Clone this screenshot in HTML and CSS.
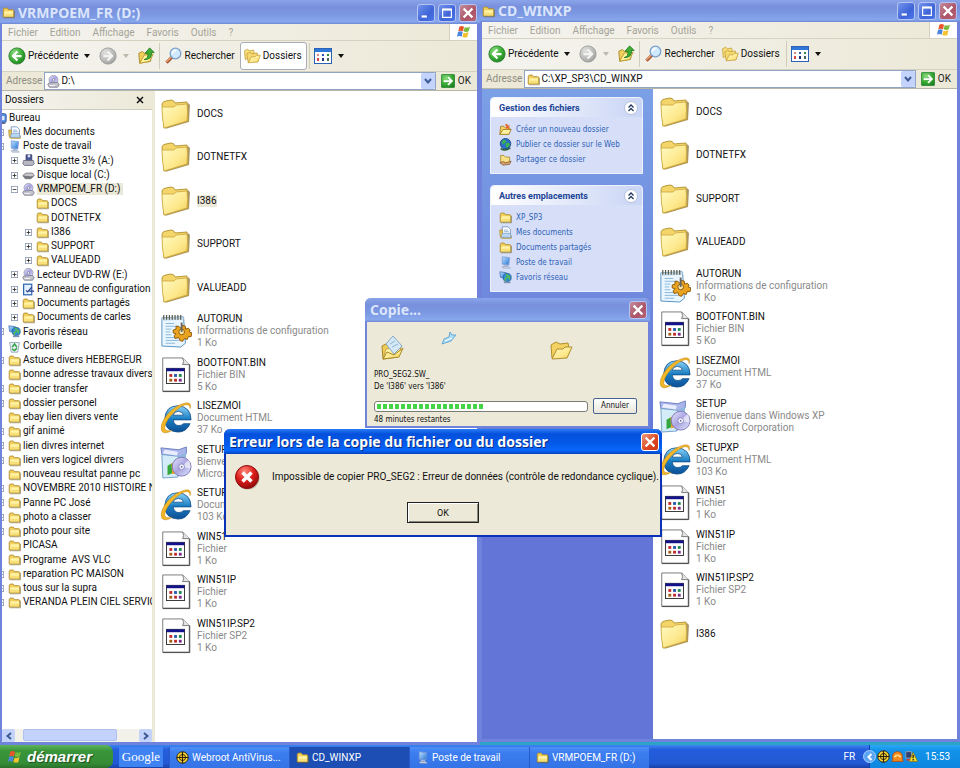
FILE: index.html
```html
<!DOCTYPE html>
<html lang="fr">
<head>
<meta charset="utf-8">
<title>CD_WINXP</title>
<link rel="stylesheet" href="styles.css">
</head>
<body>
<svg class="sprite" aria-hidden="true">
  <defs>
    <linearGradient id="gFold" x1="0" y1="0" x2="1" y2="1"><stop offset="0" stop-color="#fffbc4"/><stop offset=".6" stop-color="#fde88c"/><stop offset="1" stop-color="#f2cc58"/></linearGradient>
    <linearGradient id="gIe" x1="0" y1="0" x2="0" y2="1"><stop offset="0" stop-color="#8ad4f6"/><stop offset=".5" stop-color="#1c7fc4"/><stop offset="1" stop-color="#0d4f94"/></linearGradient>
    <radialGradient id="gGreen" cx=".35" cy=".3" r=".8"><stop offset="0" stop-color="#8fdc80"/><stop offset=".6" stop-color="#36a832"/><stop offset="1" stop-color="#1d7d22"/></radialGradient>
    <radialGradient id="gGrey" cx=".35" cy=".3" r=".8"><stop offset="0" stop-color="#e2e2e0"/><stop offset=".7" stop-color="#b4b4b2"/><stop offset="1" stop-color="#969694"/></radialGradient>
    <radialGradient id="gRed" cx=".4" cy=".25" r=".8"><stop offset="0" stop-color="#ff8a7a"/><stop offset=".5" stop-color="#de1f1c"/><stop offset="1" stop-color="#8a0808"/></radialGradient>
    <linearGradient id="gScreen" x1="0" y1="0" x2="1" y2="1"><stop offset="0" stop-color="#bfe2ff"/><stop offset="1" stop-color="#2474d8"/></linearGradient>
    <linearGradient id="gDisc" x1="0" y1="0" x2="1" y2="1"><stop offset="0" stop-color="#e8e4ff"/><stop offset=".5" stop-color="#a9a4e0"/><stop offset="1" stop-color="#dfe9ff"/></linearGradient>
  </defs>
  <symbol id="folder-big" viewBox="0 0 32 32">
    <path d="M5 31 L29 24 L30 7 L28 5z" fill="#8d7634" opacity=".75"/>
    <path d="M2 6 Q3 3 6 3 L11 2 Q14 2 15 5 L27 4 L28 23 L4 30z" fill="#f3d56a" stroke="#b99a3a"/>
    <path d="M2 9 L14 9 L16 7 L27 6 Q28 14 27 23 L4 30 Q2 20 2 9z" fill="url(#gFold)" stroke="#cda63c" stroke-width=".8"/>
  </symbol>
  <symbol id="folder" viewBox="0 0 16 16">
    <path d="M1.500 13.500V4Q2 2.500 3.500 2.500H6.500L8 4.500H13Q14.500 4.500 14.500 6V13.500z" fill="#f2cf5c" stroke="#a98725"/>
    <path d="M3 6.500H13.500V12.500H2.500z" fill="#fff3a6"/>
    <path d="M3 9.500H13.500V12.500H3z" fill="#f9df78"/>
    <path d="M2 14.500H15.500V6" fill="none" stroke="#6e5a20" opacity=".6"/>
  </symbol>
  <symbol id="folder-open" viewBox="0 0 24 24">
    <path d="M3 20 L2 7 L7 4 L11 6 L19 5 L20 11z" fill="#f3d162" stroke="#b08e2c"/>
    <path d="M3 21 L8 11 L14 11 L16 9 L23 9 L18 20z" fill="url(#gFold)" stroke="#b08e2c"/>
  </symbol>
  <symbol id="folders" viewBox="0 0 24 24">
    <path d="M3 17 L2 5 L6 3 L9 5 L14 4 L15 8z" fill="#f8de7c" stroke="#c09c36"/>
    <path d="M7 21 L5 9 L9 7 L12 9 L19 8 L20 12z" fill="#f6d870" stroke="#c09c36"/>
    <path d="M7 21 L11 13 L16 13 L18 11 L23 11 L20 20z" fill="url(#gFold)" stroke="#c09c36"/>
  </symbol>
  <symbol id="ini" viewBox="0 0 34 36">
    <path d="M2 4 L25 3 L27 31 L22 35 L2 34z" fill="#eaf6ff" stroke="#4f8fbf"/>
    <path d="M2 4 L25 3 L25 6 L2 7z" fill="#c9dcec"/>
    <path d="M4 1v5M7 1v5M10 1v5M13 1v5M16 1v5M19 1v5M22 1v5" stroke="#5b5a48" stroke-width="1.300"/>
    <path d="M6 10h9M6 13h13M6 16h6M6 19h5M6 22h6M6 25h12M6 28h14M6 31h10" stroke="#86b5d8"/>
    <path d="M14 17l3-1 0-3 3 0 2 2 2-3 3 1 0 3 3-1 2 2-1 2 3 1-1 4-3 0-1 3-3-1-2 3-3-1-1-3-4 1-1-3 2-2-3-1z" fill="#e9a31e" stroke="#8a5508"/>
    <circle cx="23" cy="19" r="3" fill="#fbe9a8" stroke="#8a5508"/><path d="M23 9v10" stroke="#666" stroke-width="2"/>
  </symbol>
  <symbol id="bin" viewBox="0 0 32 38">
    <path d="M2 1H23L30 8V36H2z" fill="#fff" stroke="#777"/>
    <path d="M23 1Q25 5 23 8H30" fill="#e4e4e4" stroke="#777"/>
    <path d="M30.500 8V36.500H2" fill="none" stroke="#444"/>
    <rect x="6" y="12" width="19" height="16" fill="#fff" stroke="#333"/><rect x="6" y="12" width="19" height="3" fill="#12128a"/>
    <path d="M9 18h3v3h-3z" fill="#c22a2a"/><path d="M14 18h3v3h-3z" fill="#2456b0"/><path d="M19 18h3v3h-3z" fill="#1f8a50"/>
    <path d="M9 23h3v3h-3z" fill="#a06018"/><path d="M14 23h3v3h-3z" fill="#c22a2a"/><path d="M19 23h3v3h-3z" fill="#7a2c8a"/>
  </symbol>
  <symbol id="ie" viewBox="0 0 34 36">
    <path d="M33 20H14Q15 26 20 26Q23 26 25 24H32Q28 33 19 33Q5 32 5 19Q6 5 19 5Q33 6 33 20z M14 15H25Q24 11 19.500 11Q15 11 14 15z" fill="url(#gIe)" stroke="#0d4a86" stroke-width=".8" fill-rule="evenodd"/>
    <path d="M32 8Q34 1 27 2Q17 4 8 14Q-1 25 2 32Q5 36 13 31Q6 33 5 29Q5 23 12 15Q20 6 27 4Q32 3 32 8z" fill="#f3b727" stroke="#b97f0c" stroke-width=".5"/>
  </symbol>
  <symbol id="setup" viewBox="0 0 34 36">
    <path d="M1 3 L20 5 L28 2 L28 9 L20 13 L2 10z" fill="#aab6ea" stroke="#6d7cc0"/>
    <path d="M2 10 L20 12 L19 34 L3 35z" fill="#d3ecf8" stroke="#6f9fc8"/>
    <path d="M20 12 L28 8 L26 28 L19 34z" fill="#8fb8e0"/>
    <path d="M5 5 L19 7 L18 11 L3 9z" fill="#e9edff"/>
    <path d="M8 22l5-3v11l-5 2z" fill="#35a83c"/><path d="M12 19l5 1v10l-4 1z" fill="#f0a21c"/>
    <circle cx="23" cy="23" r="10" fill="url(#gDisc)" stroke="#7d78b8"/>
    <path d="M23 23 L30 16 Q33 19 32 25z" fill="#fff" opacity=".6"/>
    <circle cx="23" cy="23" r="3" fill="#fff" stroke="#8984c4"/><circle cx="23" cy="23" r="1" fill="#6c68aa"/>
  </symbol>
  <symbol id="flag" viewBox="0 0 24 24">
    <path d="M5 4Q8 2 12 4L10.500 11Q7 9 3.500 11z" fill="#e8562a"/><path d="M13 5Q17 6 21 4L19 11Q15 13 11.500 11z" fill="#79bb3b"/>
    <path d="M3 12Q7 10 10 12L8.500 19Q5 17 1.500 19z" fill="#4a86dc"/><path d="M11.300 13Q15 14 18.700 12L17 20Q13 21 9.500 19.500z" fill="#f5c22f"/>
  </symbol>
  <symbol id="back" viewBox="0 0 20 20"><circle cx="10" cy="10" r="9" fill="url(#gGreen)" stroke="#2b8230"/><path d="M10.500 5L5.500 10L10.500 15M6 10H15" fill="none" stroke="#fff" stroke-width="2.500"/></symbol>
  <symbol id="forward" viewBox="0 0 20 20"><circle cx="10" cy="10" r="9" fill="url(#gGrey)" stroke="#9c9c9a"/><path d="M9.500 5L14.500 10L9.500 15M14 10H5" fill="none" stroke="#f4f4f2" stroke-width="2.500"/></symbol>
  <symbol id="up" viewBox="0 0 20 20">
    <path d="M3 18L2 7L6 5L8 7L14 6L16 10L15 16z" fill="#f0cf5c" stroke="#a98725"/><path d="M3 18L8 9L18 8L14 16z" fill="#fff09a" stroke="#b8962f"/>
    <path d="M8 14Q13 13 12 7H9L14 1L19 6H16Q17 14 8 14z" fill="#3fae35" stroke="#1f7a20"/>
  </symbol>
  <symbol id="search" viewBox="0 0 22 22"><path d="M3 19L10 12" stroke="#a8542c" stroke-width="4"/><path d="M3 18L10 11" stroke="#e8a67c" stroke-width="2"/><circle cx="14" cy="8" r="6.500" fill="#cfeaff" stroke="#7b9fca" stroke-width="1.500"/><path d="M10 8Q11 4 15 4" stroke="#fff" stroke-width="2" fill="none"/></symbol>
  <symbol id="views" viewBox="0 0 18 16"><rect x=".5" y=".5" width="17" height="15" fill="#fff" stroke="#2b62b8"/><rect x="1" y="1" width="16" height="3" fill="#2f77d8"/><path d="M3 6h2v2h-2z" fill="#d88"/><path d="M8 6h2v2h-2z" fill="#35b"/><path d="M13 6h2v2h-2z" fill="#384"/><path d="M3 10h2v3h-2z" fill="#d44"/><path d="M8 10h2v3h-2z" fill="#238"/><path d="M13 10h2v3h-2z" fill="#465"/></symbol>
  <symbol id="caret" viewBox="0 0 8 8"><path d="M1 2H7L4 6z" fill="currentColor"/></symbol>
  <symbol id="chev" viewBox="0 0 10 10"><path d="M2 3L5 6.500L8 3" fill="none" stroke="#3d5a94" stroke-width="2"/></symbol>
  <symbol id="chev-white" viewBox="0 0 10 10"><path d="M6.500 2L3.500 5L6.500 8" fill="none" stroke="#fff" stroke-width="2"/></symbol>
  <symbol id="go" viewBox="0 0 16 16"><rect x=".5" y=".5" width="15" height="15" rx="1" fill="url(#gGreen)" stroke="#2d8a35"/><path d="M8 3.500L12.500 8L8 12.500M12 8H3" fill="none" stroke="#fff" stroke-width="2"/></symbol>
  <symbol id="cd" viewBox="0 0 16 16"><circle cx="8" cy="6" r="5.500" fill="url(#gDisc)" stroke="#9a9ab4"/><circle cx="8" cy="6" r="1.500" fill="#fff" stroke="#8080a0"/><path d="M2 10L13 9L15 12L13 15H3L1 12z" fill="#c4c4cc" stroke="#77778a"/><path d="M3 13h7" stroke="#fff"/></symbol>
  <symbol id="floppy" viewBox="0 0 16 16"><path d="M5 1H12V8H5z" fill="#4c5a9a" stroke="#2d3768"/><path d="M7 1h3v3h-3z" fill="#dde"/><path d="M2 8L14 8L15 12L13 14H3L1 12z" fill="#b8b8c4" stroke="#666678"/></symbol>
  <symbol id="hdd" viewBox="0 0 16 16"><path d="M1 8L5 5H13L15 8L11 12H4z" fill="#c9c9cd" stroke="#77777f"/><path d="M1 8L11 9L15 8L11 12H4z" fill="#77777f"/></symbol>
  <symbol id="mydocs" viewBox="0 0 16 16"><path d="M4 1H11L14 4V12H4z" fill="#fff" stroke="#6a8ab8"/><path d="M1 5H4V12H15V15H3Q1 14 1 5z" fill="#f3d468" stroke="#a98725"/><path d="M6 5h5M6 7h6" stroke="#7fa8d8"/><path d="M4 9H14L15 14H3z" fill="#b8d8f6" stroke="#6a8ab8" stroke-width=".7"/></symbol>
  <symbol id="pc" viewBox="0 0 16 16"><path d="M4 1L13 2L12 11L4 10z" fill="url(#gScreen)" stroke="#7a9ad0"/><path d="M6 11h5v2h-5z" fill="#a8b8d8"/><path d="M4 13L12 13L14 15H5z" fill="#d5dcec" stroke="#7c8cb0" stroke-width=".6"/></symbol>
  <symbol id="desk" viewBox="0 0 16 16"><rect x="3" y="2" width="12" height="11" rx="2" fill="#4f8edc" stroke="#2b4f96"/><path d="M5 5h8v5h-8z" fill="#dceaff"/><path d="M5 14h9" stroke="#335"/></symbol>
  <symbol id="net" viewBox="0 0 16 16"><path d="M1 1L9 2V9L2 8z" fill="url(#gScreen)" stroke="#4c78b8"/><circle cx="10" cy="8" r="5" fill="#2f8fd8" stroke="#1b5c98"/><path d="M8 4Q12 5 10 8Q7 9 8 12M12 6q2 2 0 4" stroke="#58bb4e" stroke-width="2" fill="none"/><path d="M6 14h8" stroke="#8090b0" stroke-width="2"/></symbol>
  <symbol id="bin-recycle" viewBox="0 0 16 16"><path d="M2 3H14L12 15H4z" fill="#e6f0f4" stroke="#8aa0ac"/><path d="M5 9L8 5L11 9M11 10L8 13L5 11" fill="none" stroke="#36a047" stroke-width="1.800"/></symbol>
  <symbol id="panel" viewBox="0 0 16 16"><rect x="2" y="1.500" width="10" height="13" fill="#e2f1ff" stroke="#2f63b0" stroke-width="1.500"/><path d="M5 9l2 2 5-6M9 10h6" fill="none" stroke="#2a3f88" stroke-width="1.500"/></symbol>
  <symbol id="newfolder" viewBox="0 0 16 16"><path d="M1 14L2 4H6L8 6H13L14 8L12 14z" fill="#f3d162" stroke="#9c7a20"/><path d="M1 14L5 8H15L12 14z" fill="#fff0a0" stroke="#9c7a20"/><path d="M10 1l1 2 3 0-2 2 1 3-3-2-2 1 1-3-2-2z" fill="#e8662a"/></symbol>
  <symbol id="globe" viewBox="0 0 16 16"><circle cx="8" cy="7" r="6.500" fill="#2b6fc8" stroke="#1b3f78"/><path d="M4 3Q9 1 9 5Q6 7 4 8zM9 6q5-1 4 3l-3 3q-3-2-1-6z" fill="#3fb549"/><path d="M2 13Q8 17 14 12" stroke="#205c30" stroke-width="2" fill="none"/></symbol>
  <symbol id="share" viewBox="0 0 16 16"><path d="M2 3H6L8 5H13V12H2z" fill="#f8e088" stroke="#a98725"/><path d="M1 12Q5 9 8 12L15 10L13 14L5 15z" fill="#d8a070" stroke="#6a4424" stroke-width=".7"/></symbol>
  <symbol id="plus" viewBox="0 0 9 9"><rect x=".5" y=".5" width="8" height="8" fill="#fff" stroke="#8797ae"/><path d="M2 4.500h5M4.500 2v5" stroke="#222"/></symbol>
  <symbol id="minus" viewBox="0 0 9 9"><rect x=".5" y=".5" width="8" height="8" fill="#fff" stroke="#8797ae"/><path d="M2 4.500h5" stroke="#222"/></symbol>
  <symbol id="w-min" viewBox="0 0 16 16"><path d="M3 12h6" stroke="#fff" stroke-width="2.500"/></symbol>
  <symbol id="w-max" viewBox="0 0 16 16"><path d="M3 4H13V13H3z" fill="none" stroke="#fff" stroke-width="1.300"/><path d="M2.500 4h11" stroke="#fff" stroke-width="2.500"/></symbol>
  <symbol id="w-close" viewBox="0 0 16 16"><path d="M3 3L13 13M13 3L3 13" stroke="#fff" stroke-width="2.500"/></symbol>
  <symbol id="x" viewBox="0 0 8 8"><path d="M1 1L7 7M7 1L1 7" stroke="#111" stroke-width="1.500"/></symbol>
  <symbol id="dblup" viewBox="0 0 14 14"><circle cx="7" cy="7" r="6.500" fill="#fff" stroke="#b4c0dc"/><path d="M4.500 6.500L7 4L9.500 6.500M4.500 10L7 7.500L9.500 10" fill="none" stroke="#24365e" stroke-width="1.300"/></symbol>
  <symbol id="webroot" viewBox="0 0 16 16"><circle cx="8" cy="8" r="7" fill="#ffd938" stroke="#2a2008" stroke-width="1.200"/><path d="M8 1v14M1 8h14" stroke="#2a2008" stroke-width="1.400"/><circle cx="8" cy="8" r="3.800" fill="none" stroke="#2a2008" stroke-width="1.200"/></symbol>
  <symbol id="alert-orange" viewBox="0 0 16 16"><path d="M2 11Q1 2 8 2Q15 2 14 11L15 14H1z" fill="#f58a1e" stroke="#b04a08"/><path d="M4 9Q8 4 12 9" stroke="#ffe08a" stroke-width="2" fill="none"/></symbol>
  <symbol id="warn-net" viewBox="0 0 16 16"><path d="M1 2h7v8h-7z" fill="#34406a" stroke="#9ab"/><path d="M2 12h6" stroke="#d33" stroke-width="2"/><path d="M10 3L15.500 14H5z" fill="#ffe02e" stroke="#8a7208"/><path d="M10 6v4M10 11v2" stroke="#111" stroke-width="1.500"/></symbol>
  <symbol id="error" viewBox="0 0 26 26"><circle cx="14" cy="14" r="11.500" fill="#8a8878" opacity=".5"/><circle cx="13" cy="13" r="11.500" fill="url(#gRed)" stroke="#8c1010"/><path d="M8.500 8.500L17.500 17.500M17.500 8.500L8.500 17.500" stroke="#fff" stroke-width="3.500"/></symbol>
  <symbol id="folder-sheet" viewBox="0 0 24 26"><path d="M2 24L1 11L5 9L8 11L17 10L20 15L17 22z" fill="#efcb58" stroke="#a98725"/><path d="M2 24L5 14L20 12L18 21z" fill="url(#gFold)" stroke="#a98725" stroke-width=".6"/><path d="M5 9L12 1L21 11L13 19z" fill="#d4e8f8" stroke="#86a8c8"/><path d="M9 9l5-3M11 12l6-3" stroke="#8fb0cc"/><path d="M2 24L6 17L13 20L22 13L18 22z" fill="url(#gFold)" stroke="#a98725"/></symbol>
  <symbol id="sheet" viewBox="0 0 16 14"><path d="M1 13L3 8L8 6L9 1L11 4L15 4L10 10z" fill="#a9dcf6" stroke="#69a9d4"/><path d="M4 10l7-3" stroke="#fff"/></symbol>
</svg>

<main class="desktop">
  <section class="window window-left" aria-label="VRMPOEM_FR (D:)">
    <header class="titlebar">
      <svg class="i13"><use href="#folder"/></svg><h1>VRMPOEM_FR (D:)</h1>
      <button class="wbtn" aria-label="Réduire"><svg><use href="#w-min"/></svg></button><button class="wbtn" aria-label="Agrandir"><svg><use href="#w-max"/></svg></button><button class="wbtn close" aria-label="Fermer"><svg><use href="#w-close"/></svg></button>
    </header>
    <nav class="menubar"><button>Fichier</button><button>Edition</button><button>Affichage</button><button>Favoris</button><button>Outils</button><button>?</button><span class="brand"><svg><use href="#flag"/></svg></span></nav>
    <div class="toolbar">
      <button class="tool"><svg class="i18"><use href="#back"/></svg>Précédente<svg class="caret"><use href="#caret"/></svg></button>
      <button class="tool off" aria-label="Suivante"><svg class="i18"><use href="#forward"/></svg><svg class="caret"><use href="#caret"/></svg></button>
      <button class="tool up" aria-label="Dossier parent"><svg class="i18"><use href="#up"/></svg></button>
      <span class="sep"></span>
      <button class="tool"><svg class="i18"><use href="#search"/></svg>Rechercher</button>
      <button class="tool pressed"><svg class="i18"><use href="#folders"/></svg>Dossiers</button>
      <span class="sep"></span>
      <button class="tool" aria-label="Affichages"><svg class="i18"><use href="#views"/></svg><svg class="caret"><use href="#caret"/></svg></button>
    </div>
    <div class="address">
      <label for="addr1">Adresse</label>
      <div class="combo"><svg class="i13"><use href="#cd"/></svg><input id="addr1" type="text" value="D:\"><button aria-label="Dérouler"><svg><use href="#chev"/></svg></button></div>
      <button class="go"><svg><use href="#go"/></svg>OK</button>
    </div>
    <div class="content">
      <aside class="folders">
        <div class="panehead"><h2>Dossiers</h2><button aria-label="Fermer le volet"><svg><use href="#x"/></svg></button></div>
        <ul class="tree">
          <li><svg class="i13"><use href="#desk"/></svg><span>Bureau</span></li>
          <li class="l1"><i><svg><use href="#minus"/></svg></i><svg class="i13"><use href="#mydocs"/></svg><span>Mes documents</span></li>
          <li class="l1"><i><svg><use href="#minus"/></svg></i><svg class="i13"><use href="#pc"/></svg><span>Poste de travail</span></li>
          <li class="l2"><i><svg><use href="#plus"/></svg></i><svg class="i13"><use href="#floppy"/></svg><span>Disquette 3½ (A:)</span></li>
          <li class="l2"><i><svg><use href="#plus"/></svg></i><svg class="i13"><use href="#hdd"/></svg><span>Disque local (C:)</span></li>
          <li class="l2"><i><svg><use href="#minus"/></svg></i><svg class="i13"><use href="#cd"/></svg><span class="sel">VRMPOEM_FR (D:)</span></li>
          <li class="l3"><i></i><svg class="i13"><use href="#folder"/></svg><span>DOCS</span></li>
          <li class="l3"><i></i><svg class="i13"><use href="#folder"/></svg><span>DOTNETFX</span></li>
          <li class="l3"><i><svg><use href="#plus"/></svg></i><svg class="i13"><use href="#folder"/></svg><span>I386</span></li>
          <li class="l3"><i><svg><use href="#plus"/></svg></i><svg class="i13"><use href="#folder"/></svg><span>SUPPORT</span></li>
          <li class="l3"><i><svg><use href="#plus"/></svg></i><svg class="i13"><use href="#folder"/></svg><span>VALUEADD</span></li>
          <li class="l2"><i><svg><use href="#plus"/></svg></i><svg class="i13"><use href="#cd"/></svg><span>Lecteur DVD-RW (E:)</span></li>
          <li class="l2"><i><svg><use href="#plus"/></svg></i><svg class="i13"><use href="#panel"/></svg><span>Panneau de configuration</span></li>
          <li class="l2"><i><svg><use href="#plus"/></svg></i><svg class="i13"><use href="#folder"/></svg><span>Documents partagés</span></li>
          <li class="l2"><i><svg><use href="#plus"/></svg></i><svg class="i13"><use href="#folder"/></svg><span>Documents de carles</span></li>
          <li class="l1"><i><svg><use href="#plus"/></svg></i><svg class="i13"><use href="#net"/></svg><span>Favoris réseau</span></li>
          <li class="l1"><i></i><svg class="i13"><use href="#bin-recycle"/></svg><span>Corbeille</span></li>
          <li class="l1"><i><svg><use href="#plus"/></svg></i><svg class="i13"><use href="#folder"/></svg><span>Astuce divers HEBERGEUR</span></li>
          <li class="l1"><i></i><svg class="i13"><use href="#folder"/></svg><span>bonne adresse travaux divers</span></li>
          <li class="l1"><i><svg><use href="#plus"/></svg></i><svg class="i13"><use href="#folder"/></svg><span>docier transfer</span></li>
          <li class="l1"><i><svg><use href="#plus"/></svg></i><svg class="i13"><use href="#folder"/></svg><span>dossier personel</span></li>
          <li class="l1"><i></i><svg class="i13"><use href="#folder"/></svg><span>ebay lien divers vente</span></li>
          <li class="l1"><i><svg><use href="#plus"/></svg></i><svg class="i13"><use href="#folder"/></svg><span>gif animé</span></li>
          <li class="l1"><i><svg><use href="#plus"/></svg></i><svg class="i13"><use href="#folder"/></svg><span>lien divres internet</span></li>
          <li class="l1"><i><svg><use href="#plus"/></svg></i><svg class="i13"><use href="#folder"/></svg><span>lien vers logicel divrers</span></li>
          <li class="l1"><i></i><svg class="i13"><use href="#folder"/></svg><span>nouveau resultat panne pc</span></li>
          <li class="l1"><i><svg><use href="#plus"/></svg></i><svg class="i13"><use href="#folder"/></svg><span>NOVEMBRE 2010 HISTOIRE NO</span></li>
          <li class="l1"><i><svg><use href="#plus"/></svg></i><svg class="i13"><use href="#folder"/></svg><span>Panne PC José</span></li>
          <li class="l1"><i><svg><use href="#plus"/></svg></i><svg class="i13"><use href="#folder"/></svg><span>photo a classer</span></li>
          <li class="l1"><i><svg><use href="#plus"/></svg></i><svg class="i13"><use href="#folder"/></svg><span>photo pour site</span></li>
          <li class="l1"><i></i><svg class="i13"><use href="#folder"/></svg><span>PICASA</span></li>
          <li class="l1"><i></i><svg class="i13"><use href="#folder"/></svg><span>Programe&nbsp; AVS VLC</span></li>
          <li class="l1"><i><svg><use href="#plus"/></svg></i><svg class="i13"><use href="#folder"/></svg><span>reparation PC MAISON</span></li>
          <li class="l1"><i><svg><use href="#plus"/></svg></i><svg class="i13"><use href="#folder"/></svg><span>tous sur la supra</span></li>
          <li class="l1"><i><svg><use href="#plus"/></svg></i><svg class="i13"><use href="#folder"/></svg><span>VERANDA PLEIN CIEL SERVICE</span></li>
        </ul>
        <div class="hscroll"><button aria-label="Défiler à gauche"><svg class="left"><use href="#chev"/></svg></button><div class="track"><div class="thumb"></div></div><button aria-label="Défiler à droite"><svg class="right"><use href="#chev"/></svg></button></div>
      </aside>
      <ul class="files">
        <li><svg><use href="#folder-big"/></svg><p><b>DOCS</b></p></li>
        <li><svg><use href="#folder-big"/></svg><p><b>DOTNETFX</b></p></li>
        <li><svg><use href="#folder-big"/></svg><p><b class="sel">I386</b></p></li>
        <li><svg><use href="#folder-big"/></svg><p><b>SUPPORT</b></p></li>
        <li><svg><use href="#folder-big"/></svg><p><b>VALUEADD</b></p></li>
        <li><svg><use href="#ini"/></svg><p><b>AUTORUN</b><span>Informations de configuration</span><span>1 Ko</span></p></li>
        <li><svg><use href="#bin"/></svg><p><b>BOOTFONT.BIN</b><span>Fichier BIN</span><span>5 Ko</span></p></li>
        <li><svg><use href="#ie"/></svg><p><b>LISEZMOI</b><span>Document HTML</span><span>37 Ko</span></p></li>
        <li><svg><use href="#setup"/></svg><p><b>SETUP</b><span>Bienvenue dans Windows XP</span><span>Microsoft Corporation</span></p></li>
        <li><svg><use href="#ie"/></svg><p><b>SETUPXP</b><span>Document HTML</span><span>103 Ko</span></p></li>
        <li><svg><use href="#bin"/></svg><p><b>WIN51</b><span>Fichier</span><span>1 Ko</span></p></li>
        <li><svg><use href="#bin"/></svg><p><b>WIN51IP</b><span>Fichier</span><span>1 Ko</span></p></li>
        <li><svg><use href="#bin"/></svg><p><b>WIN51IP.SP2</b><span>Fichier SP2</span><span>1 Ko</span></p></li>
      </ul>
    </div>
  </section>

  <section class="window window-right" aria-label="CD_WINXP">
    <header class="titlebar">
      <svg class="i13"><use href="#folder"/></svg><h1>CD_WINXP</h1>
      <button class="wbtn" aria-label="Réduire"><svg><use href="#w-min"/></svg></button><button class="wbtn" aria-label="Agrandir"><svg><use href="#w-max"/></svg></button><button class="wbtn close" aria-label="Fermer"><svg><use href="#w-close"/></svg></button>
    </header>
    <nav class="menubar"><button>Fichier</button><button>Edition</button><button>Affichage</button><button>Favoris</button><button>Outils</button><button>?</button><span class="brand"><svg><use href="#flag"/></svg></span></nav>
    <div class="toolbar">
      <button class="tool"><svg class="i18"><use href="#back"/></svg>Précédente<svg class="caret"><use href="#caret"/></svg></button>
      <button class="tool off" aria-label="Suivante"><svg class="i18"><use href="#forward"/></svg><svg class="caret"><use href="#caret"/></svg></button>
      <button class="tool up" aria-label="Dossier parent"><svg class="i18"><use href="#up"/></svg></button>
      <span class="sep"></span>
      <button class="tool"><svg class="i18"><use href="#search"/></svg>Rechercher</button>
      <button class="tool folders-btn"><svg class="i18"><use href="#folders"/></svg>Dossiers</button>
      <span class="sep"></span>
      <button class="tool" aria-label="Affichages"><svg class="i18"><use href="#views"/></svg><svg class="caret"><use href="#caret"/></svg></button>
    </div>
    <div class="address">
      <label for="addr2">Adresse</label>
      <div class="combo"><svg class="i13"><use href="#folder"/></svg><input id="addr2" type="text" value="C:\XP_SP3\CD_WINXP"><button aria-label="Dérouler"><svg><use href="#chev"/></svg></button></div>
      <button class="go"><svg><use href="#go"/></svg>OK</button>
    </div>
    <div class="content">
      <aside class="tasks">
        <section class="card">
          <header><h2>Gestion des fichiers</h2><button aria-label="Replier"><svg><use href="#dblup"/></svg></button></header>
          <ul>
            <li><a href="#"><svg class="i13"><use href="#newfolder"/></svg>Créer un nouveau dossier</a></li>
            <li><a href="#"><svg class="i13"><use href="#globe"/></svg>Publier ce dossier sur le Web</a></li>
            <li><a href="#"><svg class="i13"><use href="#share"/></svg>Partager ce dossier</a></li>
          </ul>
        </section>
        <section class="card">
          <header><h2>Autres emplacements</h2><button aria-label="Replier"><svg><use href="#dblup"/></svg></button></header>
          <ul>
            <li><a href="#"><svg class="i13"><use href="#folder"/></svg>XP_SP3</a></li>
            <li><a href="#"><svg class="i13"><use href="#mydocs"/></svg>Mes documents</a></li>
            <li><a href="#"><svg class="i13"><use href="#folder"/></svg>Documents partagés</a></li>
            <li><a href="#"><svg class="i13"><use href="#pc"/></svg>Poste de travail</a></li>
            <li><a href="#"><svg class="i13"><use href="#net"/></svg>Favoris réseau</a></li>
          </ul>
        </section>
      </aside>
      <ul class="files">
        <li><svg><use href="#folder-big"/></svg><p><b>DOCS</b></p></li>
        <li><svg><use href="#folder-big"/></svg><p><b>DOTNETFX</b></p></li>
        <li><svg><use href="#folder-big"/></svg><p><b>SUPPORT</b></p></li>
        <li><svg><use href="#folder-big"/></svg><p><b>VALUEADD</b></p></li>
        <li><svg><use href="#ini"/></svg><p><b>AUTORUN</b><span>Informations de configuration</span><span>1 Ko</span></p></li>
        <li><svg><use href="#bin"/></svg><p><b>BOOTFONT.BIN</b><span>Fichier BIN</span><span>5 Ko</span></p></li>
        <li><svg><use href="#ie"/></svg><p><b>LISEZMOI</b><span>Document HTML</span><span>37 Ko</span></p></li>
        <li><svg><use href="#setup"/></svg><p><b>SETUP</b><span>Bienvenue dans Windows XP</span><span>Microsoft Corporation</span></p></li>
        <li><svg><use href="#ie"/></svg><p><b>SETUPXP</b><span>Document HTML</span><span>103 Ko</span></p></li>
        <li><svg><use href="#bin"/></svg><p><b>WIN51</b><span>Fichier</span><span>1 Ko</span></p></li>
        <li><svg><use href="#bin"/></svg><p><b>WIN51IP</b><span>Fichier</span><span>1 Ko</span></p></li>
        <li><svg><use href="#bin"/></svg><p><b>WIN51IP.SP2</b><span>Fichier SP2</span><span>1 Ko</span></p></li>
        <li><svg><use href="#folder-big"/></svg><p><b>I386</b></p></li>
      </ul>
    </div>
  </section>

  <section class="dialog copy" role="dialog" aria-label="Copie...">
    <header class="titlebar"><h1>Copie...</h1><button class="wbtn close" aria-label="Fermer"><svg><use href="#w-close"/></svg></button></header>
    <div class="copy-body">
      <div class="anim"><svg class="src"><use href="#folder-sheet"/></svg><svg class="fly"><use href="#sheet"/></svg><svg class="dst"><use href="#folder-open"/></svg></div>
      <p>PRO_SEG2.SW_</p>
      <p>De 'I386' vers 'I386'</p>
      <div class="progress-row"><div class="progress" role="progressbar" aria-valuenow="51" aria-label="Copie"><div class="fill"></div></div><button class="xpbtn">Annuler</button></div>
      <p>48 minutes restantes</p>
    </div>
  </section>

  <section class="dialog error" role="alertdialog" aria-label="Erreur">
    <header class="titlebar"><h1>Erreur lors de la copie du fichier ou du dossier</h1><button class="wbtn close" aria-label="Fermer"><svg><use href="#w-close"/></svg></button></header>
    <div class="error-body">
      <div class="message"><svg><use href="#error"/></svg><p>Impossible de copier PRO_SEG2 : Erreur de données (contrôle de redondance cyclique).</p></div>
      <button class="okbtn">OK</button>
    </div>
  </section>
</main>

<footer class="taskbar">
  <button class="start"><svg><use href="#flag"/></svg>démarrer</button>
  <button class="google">Google</button>
  <button class="task"><svg class="i13"><use href="#webroot"/></svg>Webroot AntiVirus...</button>
  <button class="task active"><svg class="i13"><use href="#folder"/></svg>CD_WINXP</button>
  <button class="task"><svg class="i13"><use href="#pc"/></svg>Poste de travail</button>
  <button class="task"><svg class="i13"><use href="#folder"/></svg>VRMPOEM_FR (D:)</button>
  <span class="lang">FR</span>
  <div class="tray"><button aria-label="Icônes masquées"><svg><use href="#chev-white"/></svg></button><svg class="i13"><use href="#webroot"/></svg><svg class="i13"><use href="#alert-orange"/></svg><svg class="i13"><use href="#warn-net"/></svg><time>15:53</time></div>
</footer>
</body>
</html>
```
FILE: styles.css
```css
* { box-sizing: border-box; margin: 0; padding: 0; }
:root { --beige: #ece9d8; --frame: #6f83dc; --ui: Roboto, "Noto Sans", sans-serif; --small: "DejaVu Sans Condensed", "Noto Sans", sans-serif; --title: "Noto Sans", "Open Sans", sans-serif; }
body { display: flex; flex-direction: column; min-height: 100vh; font: 10px/12px var(--ui); color: #111; background: #2ea3c8; overflow: hidden; }
button { font: inherit; color: inherit; background: none; border: 0; }
ul { list-style: none; }
a { color: inherit; text-decoration: none; }
svg { display: block; flex: none; }
.sprite { position: absolute; width: 0; height: 0; }
.i13 { width: 13px; height: 13px; }
.i18 { width: 18px; height: 18px; }

.desktop { position: relative; flex: 1; display: grid; grid-template-columns: 1fr 1fr; align-items: stretch; }
.window { display: flex; flex-direction: column; min-width: 0; border: solid var(--frame); border-width: 0 3px 3px 2px; background: var(--beige); }
.window-right { margin-bottom: 3px; }

.titlebar { display: flex; align-items: center; gap: 3px; height: 24px; margin: 0 -3px 0 -2px; padding: 1px 3px 0 2px; background: linear-gradient(#8aa4ea, #7890dc 30%, #7b97e2 60%, #87a7ec 90%, #7087d4); color: #dbe5fb; }
.titlebar h1 { flex: 1; font: bold 14px/16px var(--title); white-space: nowrap; }
.window-right .titlebar { height: 22px; padding-top: 0; }
.wbtn { width: 18px; height: 18px; padding: 1px; border: 1px solid #b5c5f2; border-radius: 3px; background: linear-gradient(135deg, #7494ec, #3f64d8 60%, #4a76e8); }
.wbtn svg { width: 14px; height: 14px; }
.wbtn.close { background: linear-gradient(135deg, #c48a9c, #ac5468 60%, #b86474); }

.menubar { display: flex; height: 17px; color: #a5a398; background: linear-gradient(90deg, #f4f3ee, #ece9d8); border-bottom: 1px solid #d6d2c2; }
.menubar button { padding: 1px 6px 0; }
.menubar .brand { display: flex; justify-content: center; width: 28px; margin-left: auto; background: #fff; border-left: 1px solid #d6d2c2; }
.menubar svg { width: 16px; height: 16px; }

.toolbar { display: flex; align-items: center; height: 31px; padding-left: 4px; background: linear-gradient(90deg, #f4f3ee, #ece9d8); border-bottom: 1px solid #d6d2c2; }
.tool { display: flex; align-items: center; gap: 2px; height: 28px; padding: 0 2px; }
.tool .caret { width: 8px; height: 8px; margin-left: 3px; }
.tool.off { margin-left: 4px; color: #bbb9ac; }
.tool.up { margin-left: 3px; }
.sep { width: 1px; height: 26px; margin: 0 2px; background: #cfccbb; }
.tool.pressed { margin-left: 3px; padding: 0 4px 0 2px; border: 1px solid #a9adb4; border-radius: 3px; background: #fff; }
.tool.folders-btn { margin-left: 2px; padding-right: 4px; }

.address { display: flex; align-items: stretch; height: 19px; color: #8f8d82; border-bottom: 1px solid #b8b5a6; }
.address label { padding: 3px 2px 0 4px; }
.combo { flex: 1; display: flex; align-items: center; min-width: 0; padding-left: 2px; background: #fff; border: 1px solid #8fa4c4; }
.combo input { flex: 1; min-width: 0; padding-left: 1px; border: 0; outline: 0; font: inherit; color: #111; }
.combo button { display: grid; place-items: center; width: 14px; height: 16px; background: #c3d3fb; border-radius: 2px; }
.combo button svg { width: 10px; height: 10px; }
.go { display: flex; align-items: center; gap: 3px; padding: 0 6px 0 5px; color: #222; }
.go svg { width: 14px; height: 14px; }

.content { flex: 1; display: flex; min-height: 0; background: #fff; }
.folders { display: flex; flex-direction: column; width: 153px; border-right: 3px solid var(--beige); }
.panehead { display: flex; justify-content: space-between; align-items: center; height: 19px; padding: 0 8px 0 3px; background: linear-gradient(90deg, #f4f3ee, #ece9d8); border-bottom: 1px solid #cfccbb; }
.panehead h2 { font: inherit; }
.panehead svg { width: 8px; height: 8px; }
.tree { flex: 1; overflow: hidden; padding-top: 1px; }
.tree li { display: flex; align-items: center; gap: 2px; height: 14px; margin-left: -8px; white-space: nowrap; }
.tree li:nth-child(4n) { height: 15px; }
.tree i { display: grid; place-items: center; width: 12px; flex: none; }
.tree i svg { width: 7px; height: 7px; }
.tree .l2 { padding-left: 14px; }
.tree .l3 { padding-left: 28px; }
.tree .sel { padding-right: 3px; }
.sel { background: var(--beige); }
.hscroll { display: flex; height: 13px; background: #f3f2ea; }
.hscroll button { display: grid; place-items: center; width: 13px; background: #c3d3fb; border-radius: 2px; }
.hscroll svg { width: 10px; height: 10px; }
.left { transform: rotate(90deg); }
.right { transform: rotate(-90deg); }
.track { flex: 1; padding: 0 22px 0 8px; }
.thumb { height: 12px; background: #c3d3fb; border: 1px solid #aebfee; border-radius: 2px; }

.files { flex: 1; min-width: 0; padding: 1px 0 0 5px; }
.window-right .files { padding-left: 6px; }
.files li { display: flex; align-items: center; gap: 5px; height: 43px; }
.files li:nth-child(even) { height: 44px; }
.files svg { width: 32px; height: 36px; }
.files b, .files span { display: block; width: max-content; font-weight: normal; white-space: nowrap; }
.files span { color: #8a8a8a; }

.tasks { width: 171px; padding: 8px 10px 0 8px; background: linear-gradient(#7ba0e6, #6375d6 60%); }
.card { margin-bottom: 11px; border: 1px solid #eef1fc; border-radius: 4px 4px 0 0; background: #d6dff7; color: #2f62b8; font: 8px/12px var(--small); }
.card header { display: flex; align-items: center; justify-content: space-between; height: 19px; padding: 0 4px 0 8px; background: linear-gradient(90deg, #fff, #c9d5f5); border-radius: 4px 4px 0 0; }
.card h2 { font: bold 9px/12px var(--ui); color: #1c4496; }
.card header svg { width: 14px; height: 14px; }
.card ul { padding: 5px 8px 6px; }
.card a { display: flex; align-items: center; gap: 4px; height: 15px; white-space: nowrap; }

.dialog { position: absolute; background: var(--beige); border: 2px solid var(--frame); border-top: 0; border-radius: 6px 6px 0 0; }
.dialog .titlebar { margin: 0 -2px; padding: 0 3px 0 5px; border-radius: 6px 6px 0 0; }
.copy { left: 365px; top: 298px; width: 285px; height: 130px; }
.copy-body { padding: 6px 11px 0 7px; font: 8px/12px var(--small); }
.anim { display: flex; align-items: flex-start; height: 41px; padding-left: 7px; }
.anim .src { width: 24px; height: 26px; margin-top: 7px; }
.anim .fly { width: 16px; height: 14px; margin: 3px 92px 0 36px; }
.anim .dst { width: 24px; height: 24px; margin-top: 10px; }
.progress-row { display: flex; align-items: center; gap: 5px; margin-top: 5px; }
.progress { flex: 1; height: 11px; padding: 2px; background: #fff; border: 1px solid #7d7d78; border-radius: 3px; }
.fill { width: 52%; height: 5px; background: repeating-linear-gradient(90deg, #45d445 0 4px, #fff 4px 6px); }
.xpbtn { width: 44px; height: 16px; border: 1px solid #46648e; border-radius: 2px; background: linear-gradient(#fff, #e8e6da); }

.error { left: 224px; top: 429px; width: 438px; height: 108px; border: 2px solid #0a32b8; border-top: 0; }
.error .titlebar { height: 25px; color: #fff; background: linear-gradient(#2a7cf6, #0450dc 20%, #0459ea 60%, #0868fa 85%, #0342c4); }
.error .titlebar h1 { text-shadow: 1px 1px 0 #0a2c80; }
.error .wbtn.close { border-color: #fff; background: linear-gradient(135deg, #f09a7c, #dc4620 60%, #c83a14); }
.error-body { display: flex; flex-direction: column; align-items: center; gap: 12px; padding-top: 10px; }
.message { align-self: stretch; display: flex; align-items: center; gap: 12px; padding-left: 8px; white-space: nowrap; }
.message svg { width: 26px; height: 26px; }
.okbtn { width: 72px; height: 21px; border: 1px solid #222; box-shadow: inset 1px 1px #fff, inset -1px -1px #8a887a; font-size: 9px; }

.taskbar { display: flex; align-items: stretch; height: 23px; color: #fff; background: linear-gradient(#3f86f0, #245edc 20%, #2158d4 80%, #1941a5); }
.start { display: flex; align-items: center; gap: 4px; width: 113px; padding-left: 7px; border-radius: 0 7px 7px 0; background: linear-gradient(#5eb35c, #3a963a 25%, #358c35 80%, #2a702a); font: italic bold 15px/18px "Liberation Sans", sans-serif; text-shadow: 1px 1px 1px #1c4a1c; }
.start svg { width: 16px; height: 16px; }
.google { width: 44px; margin: 2px 6px 1px; background: #3f82f2; font: 13px/16px "Liberation Serif", serif; }
.task { display: flex; align-items: center; gap: 3px; width: 120px; margin-top: 2px; padding-left: 6px; border-left: 1px solid #2a5ac8; background: linear-gradient(#4c8ff6, #3b7cf0 30%, #3574e6); white-space: nowrap; }
.task.active { background: #1c4eb4; }
.lang { margin-left: auto; align-self: center; }
.tray { display: flex; align-items: center; gap: 1px; margin-left: 14px; padding-right: 10px; background: linear-gradient(#2aa8f4, #1292ea 25%, #0f86e0); border-left: 1px solid #1042af; }
.tray button { display: grid; place-items: center; width: 13px; height: 13px; margin-left: -7px; border-radius: 7px; background: #5aa4f4; border: 1px solid #a8d0ff; }
.tray button svg { width: 10px; height: 10px; }
.tray time { margin-left: 6px; }
```
